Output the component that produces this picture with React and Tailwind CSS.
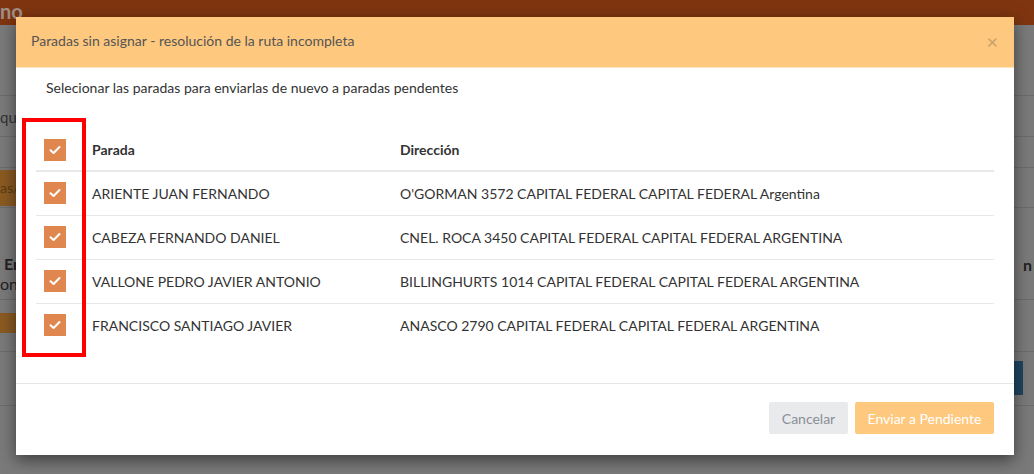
import React, { useState } from "react";

const paradas = [
  { nombre: "ARIENTE JUAN FERNANDO", direccion: "O'GORMAN 3572 CAPITAL FEDERAL CAPITAL FEDERAL Argentina" },
  { nombre: "CABEZA FERNANDO DANIEL", direccion: "CNEL. ROCA 3450 CAPITAL FEDERAL CAPITAL FEDERAL ARGENTINA" },
  { nombre: "VALLONE PEDRO JAVIER ANTONIO", direccion: "BILLINGHURTS 1014 CAPITAL FEDERAL CAPITAL FEDERAL ARGENTINA" },
  { nombre: "FRANCISCO SANTIAGO JAVIER", direccion: "ANASCO 2790 CAPITAL FEDERAL CAPITAL FEDERAL ARGENTINA" },
];

const Check = ({ checked, onChange }) => (
  <button
    onClick={onChange}
    className={`flex h-[22px] w-[22px] items-center justify-center ${checked ? "bg-[#e0874f]" : "bg-white border border-[#ccc]"}`}
  >
    {checked && (
      <svg width="12" height="10" viewBox="0 0 12 10" fill="none">
        <path d="M1.5 5.2 L4.6 8 L10.5 2" stroke="white" strokeWidth="2" strokeLinecap="round" strokeLinejoin="round" />
      </svg>
    )}
  </button>
);

const App = () => {
  const [selected, setSelected] = useState(paradas.map(() => true));
  const allChecked = selected.every(Boolean);

  const toggle = (i) => setSelected(selected.map((s, j) => (j === i ? !s : s)));
  const toggleAll = () => setSelected(selected.map(() => !allChecked));

  return (
    <div
      className="relative h-[474px] w-full overflow-hidden bg-[#7a7a7a]"
      style={{ fontFamily: 'Lato, "Open Sans", sans-serif' }}
    >
      {/* Background page (behind overlay) */}
      <div className="flex h-[25px] items-center bg-[#7f3510] text-[20px] font-bold leading-none text-[#a0908a]">
        <span className="-mt-[4px]">no</span>
      </div>
      <div className="h-[71px] border-b border-[#6c6c6c]" />
      <div className="flex h-[41px] items-start border-b border-[#6c6c6c] text-[15px] text-[#333]">
        <span className="mt-[10px]">qu</span>
      </div>
      <div className="h-[31px] border-b border-[#6c6c6c]" />
      <div className="flex h-[40px] items-center justify-between border-b border-[#6c6c6c]">
        <div className="h-[36px] w-[20px] bg-[#8a5a22] text-[14px] leading-[36px] text-[#5a3a10]">as/</div>
      </div>
      <div className="flex h-[92px] items-start justify-between border-b border-[#6c6c6c] pt-[46px] text-[16px] font-bold leading-[20px] text-[#222]">
        <div>
          <div className="pl-[4px]">En</div>
          <div className="font-normal">onf</div>
        </div>
        <div className="mr-[2px] mt-[1px]">n</div>
      </div>
      <div className="flex h-[52px] items-start border-b border-[#6c6c6c]">
        <div className="mt-[13px] h-[20px] w-[24px] bg-[#8a5a22]" />
      </div>
      <div className="flex h-[54px] items-start justify-end border-b border-[#6c6c6c] pr-[11px]">
        <div className="mt-[9px] h-[34px] w-[40px] bg-[#1f4560]" />
      </div>

      {/* Modal */}
      <div className="absolute left-[16px] top-[17px] flex h-[438px] w-[998px] flex-col bg-white shadow-[0_5px_15px_rgba(0,0,0,0.5)]">
        <div className="flex h-[51px] items-center justify-between border-b border-[#fde6c4] bg-[#fec87e] pl-[15px] pr-[16px]">
          <h4 className="-mt-[3px] text-[14px] text-[#555]">Paradas sin asignar - resolución de la ruta incompleta</h4>
          <button className="-mt-[2px] text-[20px] leading-none text-[#c9a06c]">×</button>
        </div>

        <div className="relative h-[315px] px-[20px] pt-[10px]">
          <p className="pl-[10px] text-[14px] leading-[20px] text-[#333]">
            Selecionar las paradas para enviarlas de nuevo a paradas pendentes
          </p>

          <table className="mt-[31px] w-full text-left text-[14px] text-[#333]">
            <thead>
              <tr className="h-[42px] border-b-2 border-[#e8e8e8]">
                <th className="w-[48px] pl-[8px] align-middle">
                  <Check checked={allChecked} onChange={toggleAll} />
                </th>
                <th className="w-[308px] px-[8px] font-bold">Parada</th>
                <th className="px-[8px] font-bold">Dirección</th>
              </tr>
            </thead>
            <tbody>
              {paradas.map((p, i) => (
                <tr key={p.nombre} className={`h-[44px] ${i < paradas.length - 1 ? "border-b border-[#e8e8e8]" : ""}`}>
                  <td className="pl-[8px] align-middle">
                    <Check checked={selected[i]} onChange={() => toggle(i)} />
                  </td>
                  <td className="px-[8px]">{p.nombre}</td>
                  <td className="px-[8px]">{p.direccion}</td>
                </tr>
              ))}
            </tbody>
          </table>

          {/* highlight */}
          <div className="pointer-events-none absolute left-[6px] top-[50px] h-[239px] w-[64px] border-[4px] border-[#ff0000]" />
        </div>

        <div className="flex flex-1 items-start justify-end gap-[7px] border-t border-[#e5e5e5] pr-[20px] pt-[18px]">
          <button className="h-[32px] w-[79px] rounded-[2px] bg-[#e9eaec] text-[14px] text-[#8a8f98]">Cancelar</button>
          <button className="h-[32px] w-[139px] rounded-[2px] bg-[#fec87e] text-[14px] text-white">Enviar a Pendiente</button>
        </div>
      </div>
    </div>
  );
};

export default App;
